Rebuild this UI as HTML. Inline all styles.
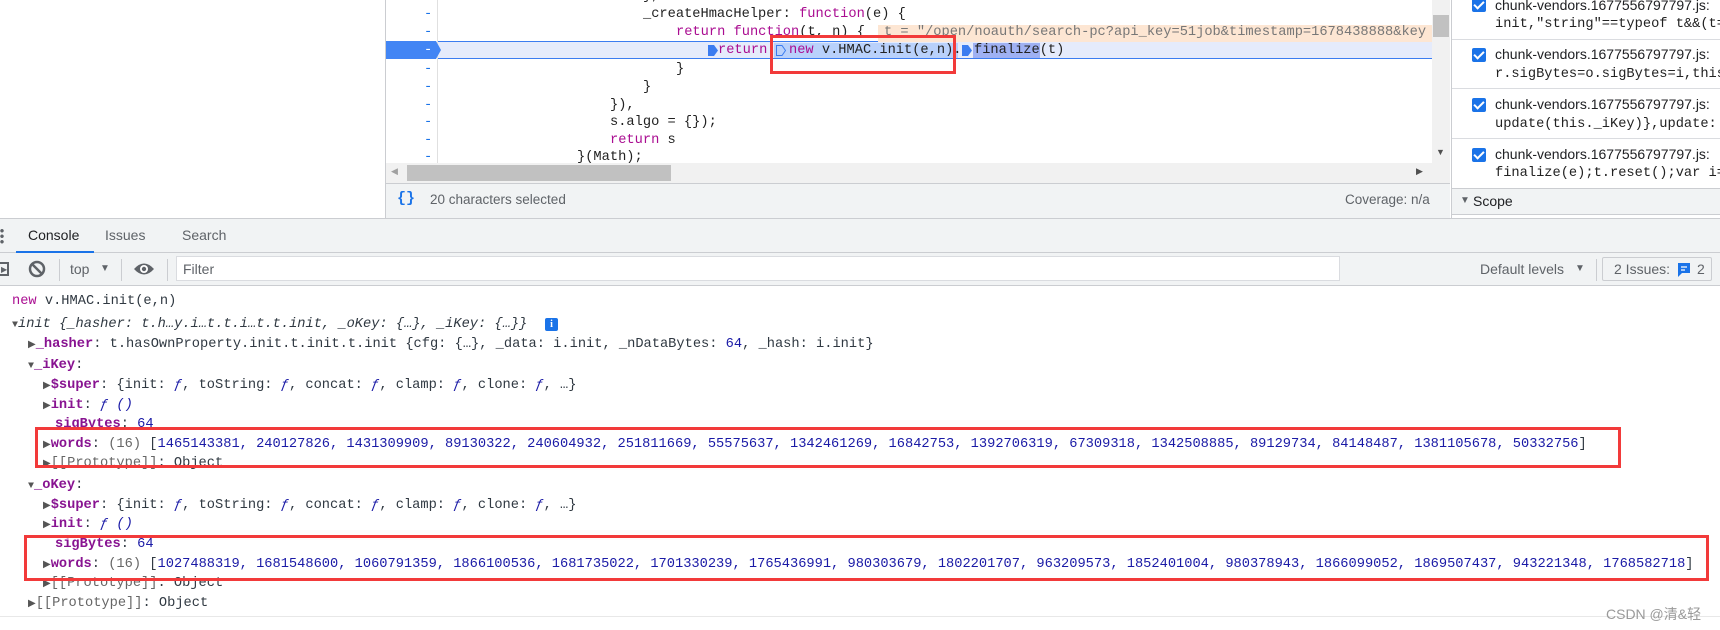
<!DOCTYPE html>
<html><head><meta charset="utf-8"><style>
*{margin:0;padding:0;box-sizing:border-box}
body{width:1720px;height:630px;overflow:hidden;background:#fff;position:relative;font-family:"Liberation Sans",sans-serif}
.a{position:absolute;white-space:pre}
.m{font-family:"Liberation Mono",monospace;font-size:13.7px;line-height:18px;color:#222}
.kw{color:#aa0d91}
.c{font-family:"Liberation Mono",monospace;font-size:13.7px;line-height:20px;color:#303942}
.p{color:#881391;font-weight:bold}
.n{color:#1a1aa6}
.g{color:#666}
.tri{font-size:10px;color:#555}
.f{color:#1a1aa6;font-style:italic}
.red{position:absolute;border:3px solid #f23a3a}
.cb{position:absolute;width:14px;height:14px;background:#1a73e8;border-radius:2px}
.cb:after{content:"";position:absolute;left:4px;top:1px;width:4px;height:8px;border:solid #fff;border-width:0 2px 2px 0;transform:rotate(45deg)}
.rt{font-size:14px;color:#202124}
</style></head><body>
<div class="a" style="left:385px;top:0;width:1px;height:218px;background:#cbcdd1"></div>
<div class="a" style="left:437px;top:0;width:1px;height:163px;background:#e0e0e0"></div>
<div class="a" style="left:438px;top:41px;width:994px;height:18px;background:#e5ebfb;border-top:1px solid #3b7cf0;border-bottom:1px solid #3b7cf0"></div>
<svg class="a" style="left:386px;top:41px" width="56" height="18"><path d="M0 0H50L55 9L50 18H0Z" fill="#4285f4"/></svg>
<div class="a m" style="left:424px;top:-12px;color:#1a73e8">-</div>
<div class="a m" style="left:424px;top:6px;color:#1a73e8">-</div>
<div class="a m" style="left:424px;top:24px;color:#1a73e8">-</div>
<div class="a m" style="left:424px;top:42px;color:#fff">-</div>
<div class="a m" style="left:424px;top:61px;color:#1a73e8">-</div>
<div class="a m" style="left:424px;top:79px;color:#1a73e8">-</div>
<div class="a m" style="left:424px;top:97px;color:#1a73e8">-</div>
<div class="a m" style="left:424px;top:114px;color:#1a73e8">-</div>
<div class="a m" style="left:424px;top:132px;color:#1a73e8">-</div>
<div class="a m" style="left:424px;top:149px;color:#1a73e8">-</div>
<div class="a m" style="left:643px;top:-12px">},</div>
<div class="a m" style="left:643px;top:6px">_createHmacHelper: <span class="kw">function</span>(e) {</div>
<div class="a m" style="left:676px;top:24px"><span class="kw">return</span> <span class="kw">function</span>(t, n) {</div>
<div class="a" style="left:878px;top:25px;width:554px;height:17px;background:#fde6d3"></div>
<div class="a m" style="left:884px;top:24px;color:#777">t = "/open/noauth/search-pc?api_key=51job&amp;timestamp=1678438888&amp;key</div>
<div class="a" style="left:774px;top:43px;width:184px;height:15px;background:#b9d1fb"></div>
<div class="a" style="left:973px;top:43px;width:67px;height:15px;background:#9fb1f3"></div>
<svg class="a" style="left:708px;top:45px" width="10" height="11"><path d="M0 0H6L10 5.5L6 11H0Z" fill="#3b7cf0"/></svg>
<svg class="a" style="left:776px;top:45px" width="10" height="11"><path d="M0.5 0.5H6L9.5 5.5L6 10.5H0.5Z" fill="none" stroke="#3b7cf0"/></svg>
<svg class="a" style="left:962px;top:45px" width="10" height="11"><path d="M0 0H6L10 5.5L6 11H0Z" fill="#3b7cf0"/></svg>
<div class="a m" style="left:718px;top:42px"><span class="kw">return</span></div>
<div class="a m" style="left:789px;top:42px"><span class="kw">new</span> v.HMAC.init(e,n).</div>
<div class="a m" style="left:974px;top:42px">finalize(t)</div>
<div class="a m" style="left:676px;top:61px">}</div>
<div class="a m" style="left:643px;top:79px">}</div>
<div class="a m" style="left:610px;top:97px">}),</div>
<div class="a m" style="left:610px;top:114px">s.algo = {});</div>
<div class="a m" style="left:610px;top:132px"><span class="kw">return</span> s</div>
<div class="a m" style="left:577px;top:149px">}(Math);</div>
<div class="red" style="left:770px;top:35px;width:186px;height:39px"></div>
<div class="a" style="left:1432px;top:0;width:18px;height:163px;background:#f1f1f1"></div>
<div class="a" style="left:1433px;top:15px;width:16px;height:22px;background:#c1c1c1"></div>
<div class="a" style="left:1436px;top:147px;color:#505050;font-size:9px">▼</div>
<div class="a" style="left:386px;top:163px;width:1064px;height:20px;background:#f1f1f1"></div>
<div class="a" style="left:407px;top:165px;width:264px;height:16px;background:#c1c1c1"></div>
<div class="a" style="left:391px;top:166px;color:#a0a0a0;font-size:9px">◀</div>
<div class="a" style="left:1416px;top:166px;color:#505050;font-size:9px">▶</div>
<div class="a" style="left:386px;top:183px;width:1064px;height:35px;background:#f1f3f4;border-top:1px solid #cbcdd1"></div>
<div class="a" style="left:397px;top:190px;color:#1a73e8;font:bold 15px 'Liberation Mono',monospace">{}</div>
<div class="a" style="left:430px;top:192px;font-size:13.5px;color:#5f6368">20 characters selected</div>
<div class="a" style="left:1345px;top:192px;font-size:13.5px;color:#5f6368">Coverage: n/a</div>
<div class="a" style="left:1451px;top:0;width:1px;height:218px;background:#cbcdd1"></div>
<div class="cb" style="left:1472px;top:-2px"></div>
<div class="a rt" style="left:1495px;top:-3px">chunk-vendors.1677556797797.js:</div>
<div class="a m" style="left:1495px;top:16px;color:#222">init,"string"==typeof t&amp;&amp;(t=</div>
<div class="a" style="left:1452px;top:39px;width:268px;height:1px;background:#dadce0"></div>
<div class="cb" style="left:1472px;top:48px"></div>
<div class="a rt" style="left:1495px;top:46px">chunk-vendors.1677556797797.js:</div>
<div class="a m" style="left:1495px;top:66px">r.sigBytes=o.sigBytes=i,this</div>
<div class="a" style="left:1452px;top:88px;width:268px;height:1px;background:#dadce0"></div>
<div class="cb" style="left:1472px;top:98px"></div>
<div class="a rt" style="left:1495px;top:96px">chunk-vendors.1677556797797.js:</div>
<div class="a m" style="left:1495px;top:116px">update(this._iKey)},update:</div>
<div class="a" style="left:1452px;top:138px;width:268px;height:1px;background:#dadce0"></div>
<div class="cb" style="left:1472px;top:148px"></div>
<div class="a rt" style="left:1495px;top:146px">chunk-vendors.1677556797797.js:</div>
<div class="a m" style="left:1495px;top:165px">finalize(e);t.reset();var i=</div>
<div class="a" style="left:1452px;top:188px;width:268px;height:27px;background:#f1f3f4;border-top:1px solid #cbcdd1;border-bottom:1px solid #cbcdd1"></div>
<div class="a" style="left:1460px;top:195px;font-size:10px;color:#5f6368">▼</div>
<div class="a" style="left:1473px;top:193px;font-size:14px;color:#202124">Scope</div>
<div class="a" style="left:0;top:218px;width:1720px;height:35px;background:#f1f3f4;border-top:1px solid #cbcdd1;border-bottom:1px solid #cbcdd1"></div>
<div class="a" style="left:0;top:228px;width:4px;height:16px;background:radial-gradient(circle,#5f6368 1.5px,transparent 2px) 0 0/4px 5.5px"></div>
<div class="a" style="left:28px;top:227px;font-size:14px;color:#202124">Console</div>
<div class="a" style="left:16px;top:251px;width:78px;height:2px;background:#1a73e8"></div>
<div class="a" style="left:105px;top:227px;font-size:14px;color:#5f6368">Issues</div>
<div class="a" style="left:182px;top:227px;font-size:14px;color:#5f6368">Search</div>
<div class="a" style="left:0;top:253px;width:1720px;height:33px;background:#f1f3f4;border-bottom:1px solid #cbcdd1"></div>
<div class="a" style="left:-2px;top:262px;width:11px;height:14px;border:2px solid #5f6368"></div>
<div class="a" style="left:1px;top:265px;font-size:8px;color:#5f6368">▶</div>
<svg class="a" style="left:28px;top:260px" width="18" height="18"><circle cx="9" cy="9" r="7" fill="none" stroke="#5f6368" stroke-width="2.5"/><path d="M4 4L14 14" stroke="#5f6368" stroke-width="2.5"/></svg>
<div class="a" style="left:59px;top:259px;width:1px;height:22px;background:#cbcdd1"></div>
<div class="a" style="left:70px;top:261px;font-size:14px;color:#5f6368">top</div>
<div class="a" style="left:100px;top:263px;font-size:10px;color:#5f6368">▼</div>
<div class="a" style="left:121px;top:259px;width:1px;height:22px;background:#cbcdd1"></div>
<svg class="a" style="left:133px;top:261px" width="22" height="16"><path d="M1 8Q11 -3 21 8Q11 19 1 8Z" fill="#5f6368"/><circle cx="11" cy="8" r="4" fill="#fff"/><circle cx="11" cy="8" r="2.2" fill="#5f6368"/></svg>
<div class="a" style="left:167px;top:259px;width:1px;height:22px;background:#cbcdd1"></div>
<div class="a" style="left:176px;top:256px;width:1164px;height:25px;background:#fff;border:1px solid #dadce0"></div>
<div class="a" style="left:183px;top:261px;font-size:14px;color:#5f6368">Filter</div>
<div class="a" style="left:1480px;top:261px;font-size:14px;color:#5f6368">Default levels</div>
<div class="a" style="left:1575px;top:263px;font-size:10px;color:#5f6368">▼</div>
<div class="a" style="left:1596px;top:259px;width:1px;height:22px;background:#cbcdd1"></div>
<div class="a" style="left:1602px;top:257px;width:110px;height:24px;border:1px solid #cbcdd1;border-radius:2px"></div>
<div class="a" style="left:1614px;top:261px;font-size:14px;color:#5f6368">2 Issues:</div>
<svg class="a" style="left:1677px;top:262px" width="14" height="16"><path d="M1 1H13V11H5L1 15Z" fill="#1a73e8"/><path d="M4 5H10M4 8H8" stroke="#fff" stroke-width="1.3"/></svg>
<div class="a" style="left:1697px;top:261px;font-size:14px;color:#5f6368">2</div>
<div class="a c" style="left:12px;top:292px"><span class="kw">new</span> v.HMAC.init(e,n)</div>
<div class="a c" style="left:12px;top:315px"><span class="tri">▼</span><i>init {_hasher: t.h…y.i…t.t.i…t.t.init, _oKey: {…}, _iKey: {…}}</i></div>
<div class="a" style="left:545px;top:318px;width:13px;height:13px;background:#1a73e8;border-radius:2px;color:#fff;font:bold 10px 'Liberation Serif',serif;text-align:center;line-height:13px">i</div>
<div class="a c" style="left:28px;top:335px"><span class="tri">▶</span><span class="p">_hasher</span>: t.hasOwnProperty.init.t.init.t.init {cfg: {…}, _data: i.init, _nDataBytes: <span class="n">64</span>, _hash: i.init}</div>
<div class="a c" style="left:28px;top:356px"><span class="tri">▼</span><span class="p">_iKey</span>:</div>
<div class="a c" style="left:43px;top:376px"><span class="tri">▶</span><span class="p">$super</span>: {init: <span class="f">ƒ</span>, toString: <span class="f">ƒ</span>, concat: <span class="f">ƒ</span>, clamp: <span class="f">ƒ</span>, clone: <span class="f">ƒ</span>, …}</div>
<div class="a c" style="left:43px;top:396px"><span class="tri">▶</span><span class="p">init</span>: <span class="f">ƒ ()</span></div>
<div class="a c" style="left:55px;top:415px"><span class="p">sigBytes</span>: <span class="n">64</span></div>
<div class="a c" style="left:43px;top:435px"><span class="tri">▶</span><span class="p">words</span>: <span class="g">(16)</span> [<span class="n">1465143381, 240127826, 1431309909, 89130322, 240604932, 251811669, 55575637, 1342461269, 16842753, 1392706319, 67309318, 1342508885, 89129734, 84148487, 1381105678, 50332756</span>]</div>
<div class="a c" style="left:43px;top:454px"><span class="tri">▶</span><span class="g">[[Prototype]]</span>: Object</div>
<div class="a c" style="left:28px;top:476px"><span class="tri">▼</span><span class="p">_oKey</span>:</div>
<div class="a c" style="left:43px;top:496px"><span class="tri">▶</span><span class="p">$super</span>: {init: <span class="f">ƒ</span>, toString: <span class="f">ƒ</span>, concat: <span class="f">ƒ</span>, clamp: <span class="f">ƒ</span>, clone: <span class="f">ƒ</span>, …}</div>
<div class="a c" style="left:43px;top:515px"><span class="tri">▶</span><span class="p">init</span>: <span class="f">ƒ ()</span></div>
<div class="a c" style="left:55px;top:535px"><span class="p">sigBytes</span>: <span class="n">64</span></div>
<div class="a c" style="left:43px;top:555px"><span class="tri">▶</span><span class="p">words</span>: <span class="g">(16)</span> [<span class="n">1027488319, 1681548600, 1060791359, 1866100536, 1681735022, 1701330239, 1765436991, 980303679, 1802201707, 963209573, 1852401004, 980378943, 1866099052, 1869507437, 943221348, 1768582718</span>]</div>
<div class="a c" style="left:43px;top:574px"><span class="tri">▶</span><span class="g">[[Prototype]]</span>: Object</div>
<div class="a c" style="left:28px;top:594px"><span class="tri">▶</span><span class="g">[[Prototype]]</span>: Object</div>
<div class="red" style="left:35px;top:427px;width:1586px;height:41px"></div>
<div class="red" style="left:24px;top:535px;width:1685px;height:46px"></div>
<div class="a" style="left:0;top:616px;width:1720px;height:1px;background:#e8e8e8"></div>
<div class="a" style="left:1606px;top:604px;font-size:14px;color:#999;font-family:'Liberation Sans','Noto Sans CJK SC',sans-serif">CSDN @清&amp;轻</div>
</body></html>
